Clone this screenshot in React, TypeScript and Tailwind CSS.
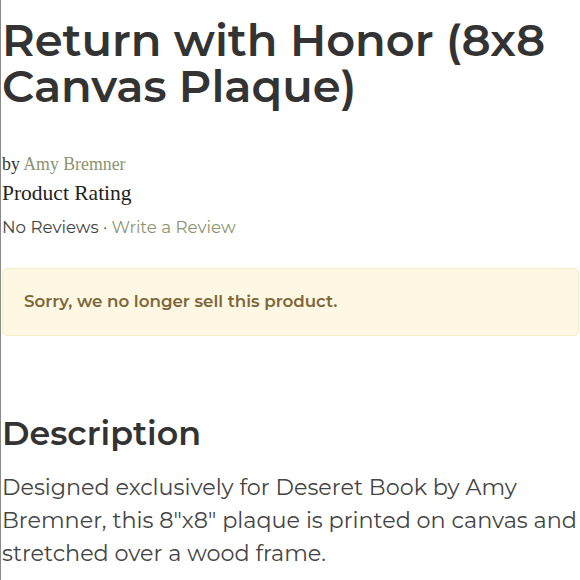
export default function App() {
  const sans = "font-['Montserrat','DejaVu_Sans',sans-serif]";
  return (
    <div className="w-[580px] h-[580px] overflow-hidden bg-white">
      <div className="h-full border-l-[1.5px] border-[#8a8a8a] pl-[1px]">
        <h1 className={`${sans} text-[44.8px] leading-[46px] font-semibold text-[#333] pt-[17px]`}>
          Return with Honor (8x8 Canvas Plaque)
        </h1>
        <div className="font-['Liberation_Serif',serif] mt-[44px]">
          <p className="text-[17.8px] leading-[22px] text-[#333]">
            by <span className="text-[#8c9470]">Amy Bremner</span>
          </p>
          <p className="text-[21.5px] leading-[30px] text-[#222] mt-[3px]">Product Rating</p>
        </div>
        <p className={`${sans} text-[16.7px] leading-[24px] text-[#444] mt-[7px]`}>
          No Reviews · <span className="text-[#8c9470]">Write a Review</span>
        </p>
        <div className="mt-[29px] mr-[1px] rounded-[5px] border border-[#f5ecc9] bg-[#fdf7e4] h-[68px] flex items-center px-[21px]">
          <p className={`${sans} text-[16.7px] font-semibold text-[#7e6637]`}>
            Sorry, we no longer sell this product.
          </p>
        </div>
        <h2 className={`${sans} text-[33.3px] leading-[40px] font-semibold text-[#333] mt-[77px]`}>
          Description
        </h2>
        <p className={`${sans} text-[22.3px] leading-[33px] text-[#444] mt-[18px]`}>
          Designed exclusively for Deseret Book by Amy Bremner, this 8"x8" plaque is printed on canvas and stretched over a wood frame.
        </p>
      </div>
    </div>
  );
}
